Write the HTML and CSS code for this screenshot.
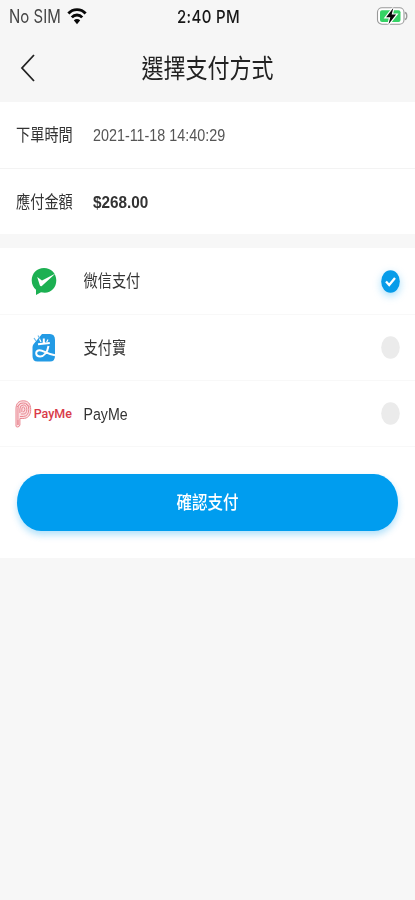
FILE: index.html
```html
<!DOCTYPE html>
<html lang="zh-Hant">
<head>
<meta charset="utf-8">
<meta name="viewport" content="width=device-width">
<title>選擇支付方式</title>
<link rel="stylesheet" href="styles.css">
</head>
<body>
<header class="header">
  <div class="status">
    <div class="carrier"><span class="tall">No SIM</span>
      <svg class="wifi" width="20" height="18" viewBox="0 0 20 18" fill="none" stroke="#080808" stroke-width="2.8"><path d="M1.4 6.5C6 1.2 14 1.2 18.6 6.5"/><path d="M4.8 10.4C7.6 7.2 12.4 7.2 15.2 10.4"/><path d="M10 17.2 6.8 13.3Q10 10.8 13.2 13.3Z" fill="#080808" stroke="none"/></svg>
    </div>
    <span class="clock tall">2:40 PM</span>
    <svg class="battery" width="32" height="20" viewBox="0 0 32 20"><rect x="1.5" y="1.8" width="26.5" height="16.4" rx="4.5" fill="#fff" stroke="#999" stroke-width="1.1"/><rect x="4" y="4.2" width="20.5" height="11.8" rx="2" fill="#35d365"/><path d="M29 6.5Q30.800 7 30.800 10T29 13.500" fill="none" stroke="#999" stroke-width="1.3"/><path d="M17.300 2 10.100 11.200h4.200L12.500 18.300l7.600-9.700h-4.400z" fill="#080808" stroke="#fff" stroke-width="2.400" paint-order="stroke"/></svg>
  </div>
  <nav class="nav">
    <svg class="back" width="16" height="30" viewBox="0 0 16 30" fill="none" stroke="#222" stroke-width="1.8"><path d="M14 2 2 15 14 28"/></svg>
    <h1 class="title tall">選擇支付方式</h1>
  </nav>
</header>
<main>
  <section class="details">
    <div class="row"><span class="label tall">下單時間</span><span class="date tall">2021-11-18 14:40:29</span></div>
    <div class="row"><span class="label tall">應付金額</span><span class="amount tall">$268.00</span></div>
  </section>
  <section class="methods">
    <div class="method">
      <div class="logo"><svg width="26" height="29" viewBox="0 0 26 29"><path d="M13 1C6 1 .7 6.300.7 13.300C.7 17.500 2.500 20.800 5 22.700L5 28 10 25.200C19 27.500 25.300 21.500 25.300 13.300C25.300 6.300 20 1 13 1Z" fill="#1cb052"/><path d="M6.200 10 11 13.500 24.500 6.500 10.800 19Q9.500 19.700 8.800 18.300Z" fill="#fff"/></svg></div>
      <span class="name tall">微信支付</span>
      <svg class="radio on" width="19" height="23" viewBox="0 0 19 23"><ellipse cx="9.500" cy="11.500" rx="9.300" ry="11.200" fill="#079ce9"/><path d="M5 11.500 8.200 15 14 8" fill="none" stroke="#fff" stroke-width="2.300"/></svg>
    </div>
    <div class="method">
      <div class="logo"><svg width="24" height="28" viewBox="0 0 24 28"><path d="M10 0h8q5 0 5 6v16q0 5.500-5 5.500H5.500q-5 0-5-5.500V13q0-2 2-4z" fill="#239be5"/><g fill="none" stroke="#fff" stroke-width="2"><path d="M6 10.200 17.800 9M11.800 4.500v5.500M16.500 12C15.500 18 12 22.500 8.200 22.500C3 22.500 3 16.300 7.500 16.300C11.500 16.300 15 20 23 21.300"/></g><path d="M7.500 5 9 8M16 5.500 14.700 8" fill="none" stroke="#fff" stroke-width="1.200"/><path d="M2 4 4 7M6 1.500 8 5" fill="none" stroke="#69baeb" stroke-width="1.200"/></svg></div>
      <span class="name tall">支付寶</span>
      <svg class="radio" width="19" height="23" viewBox="0 0 19 23"><ellipse cx="9.500" cy="11.500" rx="9.300" ry="11.300" fill="#ebebeb"/></svg>
    </div>
    <div class="method">
      <div class="logo payme"><svg width="18" height="28" viewBox="0 0 17 28" preserveAspectRatio="none" fill="none" stroke="#e98791" stroke-width="1"><path d="M1 26V9C1 3 4 .8 8.500.8S16 3.500 16 9.500 13 18.500 8 18.500H5V25Q4.500 27 2.500 27 1 27 1 26Z" fill="#fbdfe2"/><path d="M3 25V9Q3 3 8.500 3T14 9.500 8.500 16.500H5M5 13V9Q5 5 8.500 5T12 9.500 8.500 14H6M7 12V9Q7 7 8.500 7T10 9.500 8 12M3 20V25M2 7 6 3M11 4l4 3"/></svg><span class="brand tall">PayMe</span></div>
      <span class="name tall">PayMe</span>
      <svg class="radio" width="19" height="23" viewBox="0 0 19 23"><ellipse cx="9.500" cy="11.500" rx="9.300" ry="11.300" fill="#ebebeb"/></svg>
    </div>
  </section>
  <div class="action"><button class="confirm"><span class="tall">確認支付</span></button></div>
</main>
</body>
</html>
```

FILE: styles.css
```css
* { box-sizing: border-box; }
body { margin: 0; min-height: 900px; background: #f7f7f7; color: #333; font-family: "Liberation Sans", "Noto Sans CJK TC", sans-serif; font-size: 14.2px; }
.tall { display: inline-block; transform: scaleY(1.2); white-space: nowrap; line-height: 20px; }
.header { height: 102px; background: #f6f6f6; }
.status { height: 34px; padding: 0 7px 0 9px; display: grid; grid-template-columns: 1fr auto 1fr; align-items: center; }
.carrier { display: flex; align-items: center; gap: 6px; color: #444; font-family: Inter, sans-serif; font-size: 15px; }
.wifi { margin-top: -2px; }
.clock { font-family: Inter, sans-serif; font-size: 15px; font-weight: 500; color: #171717; letter-spacing: .35px; transform: scaleY(1.15); }
.battery { justify-self: end; margin-top: -2px; }
.nav { height: 68px; display: grid; grid-template-columns: 50px 1fr 50px; align-items: center; }
.back { margin-left: 20px; }
.title { margin: 0; padding-top: 2px; font-size: 22px; font-weight: 400; text-align: center; color: #222; line-height: 30px; }
.details { height: 132px; background: #fff; }
.row { height: 66px; padding: 1px 16px 0; display: grid; grid-template-columns: 77px 1fr; align-items: center; justify-items: start; border-bottom: 1px solid #f3f3f3; }
.row:first-child { height: 67px; padding-top: 0; }
.row:last-child { height: 65px; border-bottom: 0; }
.date { color: #555; font-size: 14.35px; transform: scaleY(1.15); }
.amount { font-size: 15.3px; font-weight: 700; transform: scaleY(1.12); }
.methods { margin-top: 14px; background: #fff; }
.method { height: 66px; padding: 0 15px; display: grid; grid-template-columns: 57px 1fr 19px; column-gap: 11.5px; align-items: center; justify-items: start; border-bottom: 1px solid #f8f8f8; }
.method:first-child { height: 67px; }
.logo { width: 57px; display: flex; align-items: center; justify-content: center; }
.payme { justify-content: flex-start; gap: 2px; }
.brand { color: #d93b49; font-family: Roboto, sans-serif; font-size: 12.5px; font-weight: 500; transform: none; }
.on { overflow: visible; filter: drop-shadow(0 3px 4px rgba(0, 160, 240, .35)); }
.action { height: 111px; padding: 27px 17px; background: #fff; }
.confirm { width: 100%; height: 57px; padding: 0; border: 0; border-radius: 24px / 28.5px; background: #009def; color: #fff; font: 500 15.5px "Liberation Sans", "Noto Sans CJK TC", sans-serif; box-shadow: 0 4px 7px rgba(0, 157, 239, .3); }
```
